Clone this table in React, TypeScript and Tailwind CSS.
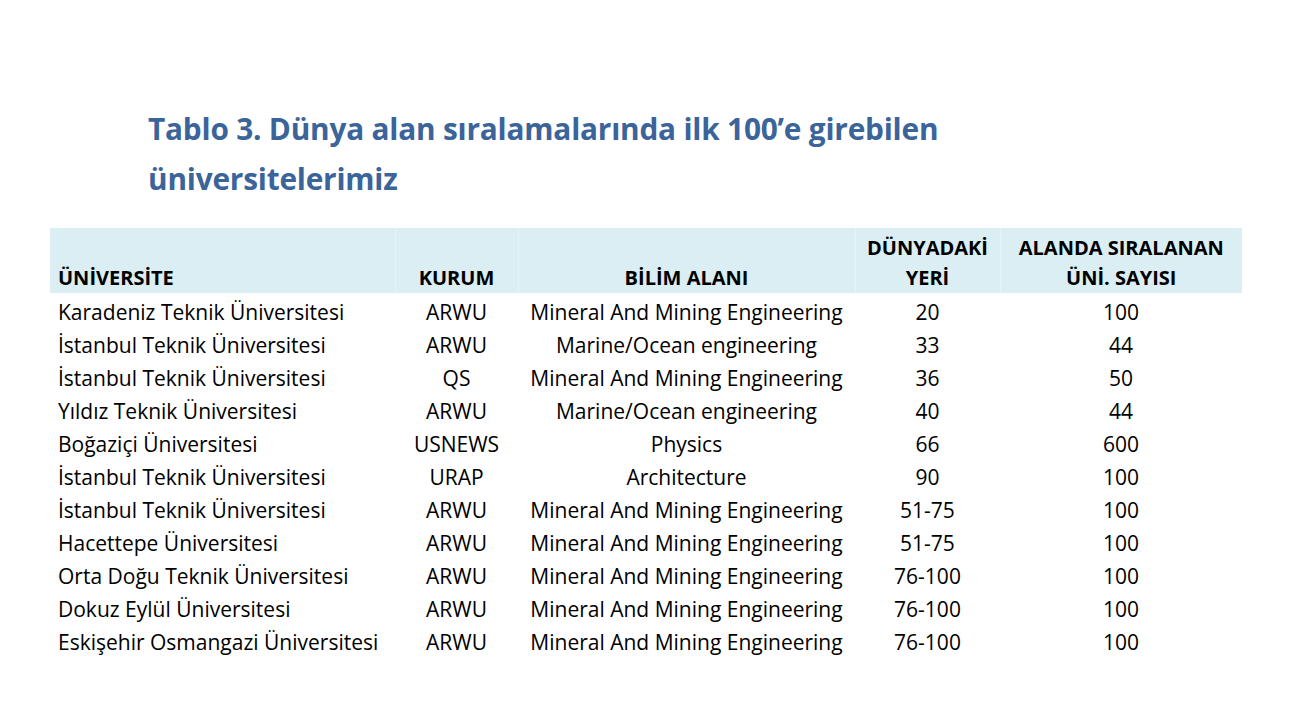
import React from 'react'

type Row = {
  uni: string
  kurum: string
  alan: string
  yer: string
  sayi: string
}

const rows: Row[] = [
  { uni: 'Karadeniz Teknik Üniversitesi', kurum: 'ARWU', alan: 'Mineral And Mining Engineering', yer: '20', sayi: '100' },
  { uni: 'İstanbul Teknik Üniversitesi', kurum: 'ARWU', alan: 'Marine/Ocean engineering', yer: '33', sayi: '44' },
  { uni: 'İstanbul Teknik Üniversitesi', kurum: 'QS', alan: 'Mineral And Mining Engineering', yer: '36', sayi: '50' },
  { uni: 'Yıldız Teknik Üniversitesi', kurum: 'ARWU', alan: 'Marine/Ocean engineering', yer: '40', sayi: '44' },
  { uni: 'Boğaziçi Üniversitesi', kurum: 'USNEWS', alan: 'Physics', yer: '66', sayi: '600' },
  { uni: 'İstanbul Teknik Üniversitesi', kurum: 'URAP', alan: 'Architecture', yer: '90', sayi: '100' },
  { uni: 'İstanbul Teknik Üniversitesi', kurum: 'ARWU', alan: 'Mineral And Mining Engineering', yer: '51-75', sayi: '100' },
  { uni: 'Hacettepe Üniversitesi', kurum: 'ARWU', alan: 'Mineral And Mining Engineering', yer: '51-75', sayi: '100' },
  { uni: 'Orta Doğu Teknik Üniversitesi', kurum: 'ARWU', alan: 'Mineral And Mining Engineering', yer: '76-100', sayi: '100' },
  { uni: 'Dokuz Eylül Üniversitesi', kurum: 'ARWU', alan: 'Mineral And Mining Engineering', yer: '76-100', sayi: '100' },
  { uni: 'Eskişehir Osmangazi Üniversitesi', kurum: 'ARWU', alan: 'Mineral And Mining Engineering', yer: '76-100', sayi: '100' },
]

export default function App() {
  return (
    <div className="min-h-[705px] w-full bg-white font-['Open_Sans',sans-serif] text-black">
      {/* ── Title ── */}
      <h1 className="pl-[148px] pt-[104px] text-[29.8px] font-bold leading-[50px] text-[#3b649a] tracking-[-0.2px]">
        Tablo 3. Dünya alan sıralamalarında ilk 100’e girebilen
        <br />
        üniversitelerimiz
      </h1>

      {/* ── Table ── */}
      <table className="ml-[50px] mt-[24px] w-[1192px] table-fixed border-collapse text-[21px]">
        <colgroup>
          <col className="w-[345px]" />
          <col className="w-[123px]" />
          <col className="w-[337px]" />
          <col className="w-[145px]" />
          <col className="w-[242px]" />
        </colgroup>
        <thead>
          <tr className="h-[65px] bg-[#daeef3] text-[20px] font-bold leading-[30px]">
            <th className="border-r border-[#e6f3f7] pl-[8px] text-left align-bottom">ÜNİVERSİTE</th>
            <th className="border-r border-[#e6f3f7] text-center align-bottom">KURUM</th>
            <th className="border-r border-[#e6f3f7] text-center align-bottom">BİLİM ALANI</th>
            <th className="border-r border-[#e6f3f7] text-center align-bottom">
              DÜNYADAKİ
              <br />
              YERİ
            </th>
            <th className="text-center align-bottom">
              ALANDA SIRALANAN
              <br />
              ÜNİ. SAYISI
            </th>
          </tr>
        </thead>
        <tbody>
          {rows.map((r, i) => (
            <tr key={i} className="h-[33px] leading-[28px]">
              <td className="whitespace-nowrap p-0 pl-[8px] pt-[5px] text-left">{r.uni}</td>
              <td className="p-0 pt-[5px] text-center">{r.kurum}</td>
              <td className="whitespace-nowrap p-0 pt-[5px] text-center">{r.alan}</td>
              <td className="p-0 pt-[5px] text-center">{r.yer}</td>
              <td className="p-0 pt-[5px] text-center">{r.sayi}</td>
            </tr>
          ))}
        </tbody>
      </table>
    </div>
  )
}
